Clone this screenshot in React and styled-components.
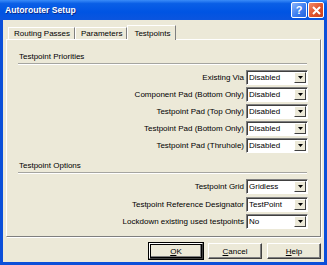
import React from "react";
import styled, { createGlobalStyle } from "styled-components";

const priorities = [
  { label: "Existing Via", value: "Disabled" },
  { label: "Component Pad (Bottom Only)", value: "Disabled" },
  { label: "Testpoint Pad (Top Only)", value: "Disabled" },
  { label: "Testpoint Pad (Bottom Only)", value: "Disabled" },
  { label: "Testpoint Pad (Thruhole)", value: "Disabled" },
];

const options = [
  { label: "Testpoint Grid", value: "Gridless" },
  { label: "Testpoint Reference Designator", value: "TestPoint" },
  { label: "Lockdown existing used testpoints", value: "No" },
];

const tabs = ["Routing Passes", "Parameters", "Testpoints"];

export default function App() {
  return (
    <Window>
      <GlobalStyle />
      <TitleBar>
        <Title>Autorouter Setup</Title>
        <Caption>
          <CaptionButton>?</CaptionButton>
          <CaptionButton close>
            <svg width="9" height="9" viewBox="0 0 9 9">
              <path d="M1 1 L8 8 M8 1 L1 8" stroke="#fff" strokeWidth="2" />
            </svg>
          </CaptionButton>
        </Caption>
      </TitleBar>
      <Client>
        <TabStrip>
          {tabs.map((t, i) => (
            <Tab key={t} active={i === 2}>
              {t}
            </Tab>
          ))}
        </TabStrip>
        <Panel>
          <SectionTitle>Testpoint Priorities</SectionTitle>
          <Divider />
          <Rows>
            {priorities.map((r) => (
              <Row key={r.label}>
                <Label>{r.label}</Label>
                <Select>
                  <Value>{r.value}</Value>
                  <Arrow />
                </Select>
              </Row>
            ))}
          </Rows>
          <SectionTitle gap>Testpoint Options</SectionTitle>
          <Divider />
          <Rows wide>
            {options.map((r) => (
              <Row key={r.label}>
                <Label>{r.label}</Label>
                <Select>
                  <Value>{r.value}</Value>
                  <Arrow />
                </Select>
              </Row>
            ))}
          </Rows>
        </Panel>
        <Buttons>
          <Button isDefault>
            <u>O</u>K
          </Button>
          <Button>
            <u>C</u>ancel
          </Button>
          <Button>
            <u>H</u>elp
          </Button>
        </Buttons>
      </Client>
    </Window>
  );
}

const Arrow = () => (
  <ArrowBox>
    <svg width="5" height="3" viewBox="0 0 5 3">
      <path d="M0 0 H5 L2.5 3 Z" fill="#000" />
    </svg>
  </ArrowBox>
);

const GlobalStyle = createGlobalStyle`
  body {
    margin: 0;
    font-family: "Liberation Sans", Arial, sans-serif;
    font-size: 8px;
    color: #000;
  }
`;

const Window = styled.div`
  width: 327px;
  height: 265px;
  box-sizing: border-box;
  display: flex;
  flex-direction: column;
  background: #0b4fd9;
  padding: 0 3px 3px;
`;

const TitleBar = styled.div`
  height: 20px;
  margin: 0 -3px;
  padding: 0 3px 0 5px;
  display: flex;
  align-items: center;
  justify-content: space-between;
  background: linear-gradient(#3a8cf8 0%, #0a5fe6 18%, #0054e3 60%, #0b55df 100%);
`;

const Title = styled.span`
  color: #fff;
  font-weight: bold;
  font-size: 8.6px;
  text-shadow: 1px 1px 0 #0a2a8a;
`;

const Caption = styled.div`
  display: flex;
  gap: 1px;
`;

const CaptionButton = styled.div`
  width: 16px;
  height: 16px;
  box-sizing: border-box;
  border: 1px solid #fff;
  border-radius: 2px;
  display: flex;
  align-items: center;
  justify-content: center;
  color: #fff;
  font-weight: bold;
  font-size: 11px;
  background: ${(p) =>
    p.close
      ? "linear-gradient(135deg, #f08a6a, #e0522b 55%, #c7401c)"
      : "linear-gradient(135deg, #8fb6fb, #3d7ef0 55%, #2463dd)"};
`;

const Client = styled.div`
  flex: 1;
  background: #ece9d8;
  display: flex;
  flex-direction: column;
  padding: 5px 3px 3px;
`;

const TabStrip = styled.div`
  display: flex;
  align-items: flex-end;
  height: 14px;
  padding-left: 2px;
  position: relative;
  z-index: 1;
`;

const Tab = styled.div`
  box-sizing: border-box;
  height: ${(p) => (p.active ? "15px" : "12px")};
  margin-bottom: ${(p) => (p.active ? "-1px" : "0")};
  padding: ${(p) => (p.active ? "1px 5px 0 6px" : "0 4px 0 5px")};
  border-top: 1px solid #fff;
  border-left: 1px solid #fff;
  border-right: 1px solid #7f7f7f;
  background: #ece9d8;
  display: flex;
  align-items: center;
  align-self: flex-end;
  white-space: nowrap;
`;

const Panel = styled.div`
  height: 198px;
  box-sizing: border-box;
  border-top: 1px solid #fff;
  border-left: 1px solid #fff;
  border-right: 1px solid #7f7f7f;
  border-bottom: 1px solid #7f7f7f;
  box-shadow: 1px 1px 0 #fff;
  padding: 12px 12px 0 12px;
  display: flex;
  flex-direction: column;
`;

const SectionTitle = styled.div`
  height: 10px;
  line-height: 10px;
  margin-top: ${(p) => (p.gap ? "8px" : "0")};
`;

const Divider = styled.div`
  height: 0;
  border-top: 1px solid #a5a5a0;
  border-bottom: 1px solid #fff;
  margin: 1px 1px 0 -1px;
`;

const Rows = styled.div`
  display: flex;
  flex-direction: column;
  gap: ${(p) => (p.wide ? "2.5px" : "2px")};
  margin-top: 5px;
`;

const Row = styled.div`
  display: flex;
  justify-content: flex-end;
  align-items: center;
  gap: 2px;
  height: 15px;
`;

const Label = styled.span`
  white-space: nowrap;
`;

const Select = styled.div`
  width: 62px;
  height: 15px;
  box-sizing: border-box;
  border-top: 1px solid #7f7f7f;
  border-left: 1px solid #7f7f7f;
  border-right: 1px solid #fff;
  border-bottom: 1px solid #fff;
  box-shadow: inset 1px 1px 0 #404040;
  background: #fff;
  display: flex;
  align-items: stretch;
  padding: 1px 1px 1px 2px;
`;

const Value = styled.span`
  flex: 1;
  display: flex;
  align-items: center;
`;

const ArrowBox = styled.div`
  width: 12px;
  box-sizing: border-box;
  background: #ece9d8;
  border-top: 1px solid #fff;
  border-left: 1px solid #fff;
  border-right: 1px solid #404040;
  border-bottom: 1px solid #404040;
  display: flex;
  align-items: center;
  justify-content: center;
`;

const Buttons = styled.div`
  display: flex;
  justify-content: flex-end;
  gap: 5px;
  margin-top: 6px;
`;

const Button = styled.div`
  width: 54px;
  height: 16px;
  box-sizing: border-box;
  display: flex;
  align-items: center;
  justify-content: center;
  background: #ece9d8;
  border-top: 1px solid #fff;
  border-left: 1px solid #fff;
  border-right: 1px solid #404040;
  border-bottom: 1px solid #404040;
  outline: ${(p) => (p.isDefault ? "1px solid #000" : "none")};
  outline-offset: 0;
  box-shadow: ${(p) =>
    p.isDefault
      ? "inset 0 0 0 1px #000, inset -1px -1px 0 1px #7f7f7f"
      : "inset -1px -1px 0 #7f7f7f"};
`;
